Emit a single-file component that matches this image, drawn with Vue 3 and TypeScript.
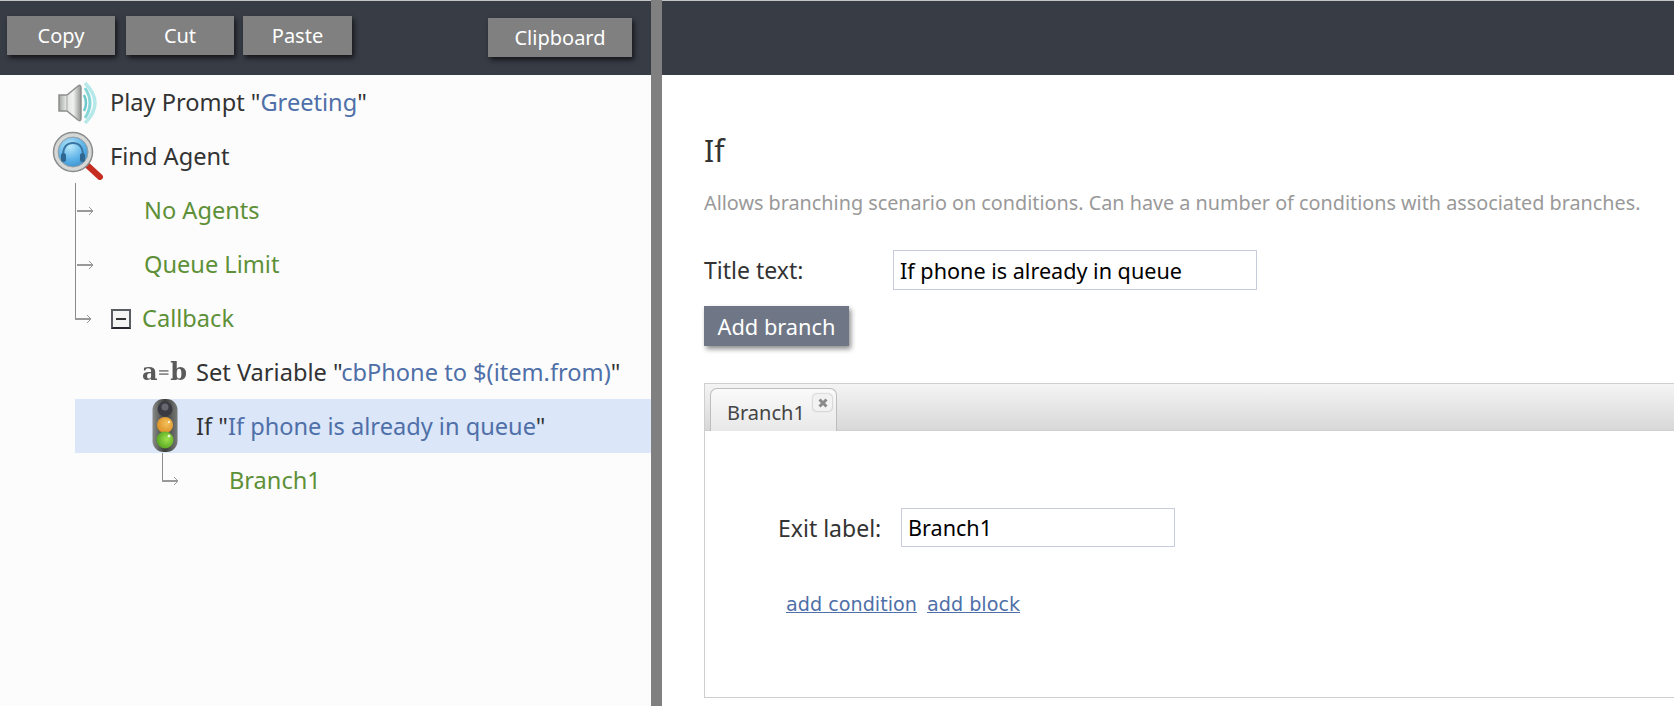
<script setup lang="ts">
const toolButtons = ['Copy', 'Cut', 'Paste'];
</script>

<template>
  <div class="page">
    <section class="left">
      <div class="toolbar">
        <button v-for="b in toolButtons" :key="b" class="tool" :class="b.toLowerCase()">{{ b }}</button>
        <button class="tool clipboard">Clipboard</button>
      </div>
      <div class="tree">
        <div class="row top">
          <svg class="ico ico-play" width="44" height="42" viewBox="0 0 44 42">
            <defs>
              <linearGradient id="cone" x1="0" y1="0" x2="1" y2="0">
                <stop offset="0" stop-color="#a2a6a3" />
                <stop offset=".3" stop-color="#dfe2df" />
                <stop offset=".65" stop-color="#f0f1f0" />
                <stop offset="1" stop-color="#8f928f" />
              </linearGradient>
            </defs>
            <path d="M1 13 L9 13 L20 4 Q23 2 23 6 L23 36 Q23 40 20 38 L9 29 L1 29 Z" fill="url(#cone)" stroke="#8c8f8c" stroke-width="1.5" />
            <path d="M9 13 V29" stroke="#a5a8a6" />
            <path d="M26 13 Q30 21 26 29" fill="none" stroke="#6cc8cb" stroke-width="2.5" />
            <path d="M27 6 Q37 21 27 36" fill="none" stroke="#86d6d8" stroke-width="3" />
            <path d="M27 1 Q47 21 27 41" fill="none" stroke="#b5e8e8" stroke-width="3.5" />
          </svg>
          <span class="dark">Play Prompt "<span class="blue">Greeting</span>"</span>
        </div>
        <div class="row top">
          <svg class="ico ico-find" width="52" height="50" viewBox="0 0 52 50">
            <defs>
              <radialGradient id="lens" cx=".4" cy=".3" r=".8">
                <stop offset="0" stop-color="#bce9fb" />
                <stop offset=".6" stop-color="#58b0e6" />
                <stop offset="1" stop-color="#3a8cc8" />
              </radialGradient>
            </defs>
            <path d="M35 34 L48 46" stroke="#c42d20" stroke-width="6" stroke-linecap="round" />
            <circle cx="21" cy="21" r="19.5" fill="#d6d8d7" stroke="#8a8c8b" stroke-width="1.5" />
            <circle cx="21" cy="21" r="15" fill="url(#lens)" stroke="#9a9e9f" />
            <path d="M11 25 Q11 12 21 12 Q31 12 31 25" fill="none" stroke="#3a76a4" stroke-width="2" />
            <rect x="9" y="22" width="5" height="9" rx="2.5" fill="#2f6791" />
            <rect x="28" y="22" width="5" height="9" rx="2.5" fill="#2f6791" />
          </svg>
          <span class="dark">Find Agent</span>
        </div>
        <div class="row branch">
          <svg class="link" width="24" height="54" viewBox="0 0 24 54">
            <path d="M.5 0 V54" stroke="#8b8b8b" fill="none" />
            <path d="M2 28 H18" stroke="#999" stroke-width="2" fill="none" />
            <path d="M14 24 L18 28 L14 32" stroke="#999" fill="none" />
          </svg>
          <span class="green exit">No Agents</span>
        </div>
        <div class="row branch">
          <svg class="link" width="24" height="54" viewBox="0 0 24 54">
            <path d="M.5 0 V54" stroke="#8b8b8b" fill="none" />
            <path d="M2 28 H18" stroke="#999" stroke-width="2" fill="none" />
            <path d="M14 24 L18 28 L14 32" stroke="#999" fill="none" />
          </svg>
          <span class="green exit">Queue Limit</span>
        </div>
        <div class="row branch">
          <svg class="link" width="24" height="54" viewBox="0 0 24 54">
            <path d="M.5 0 V27.5" stroke="#8b8b8b" fill="none" />
            <path d="M0 28 H16" stroke="#999" stroke-width="2" fill="none" />
            <path d="M12 24 L16 28 L12 32" stroke="#999" fill="none" />
          </svg>
          <span class="minus"><i></i></span>
          <span class="green">Callback</span>
        </div>
        <div class="row child">
          <span class="ico-var"><b>a</b><em>=</em><b>b</b></span>
          <span class="dark">Set Variable "<span class="blue">cbPhone to $(item.from)</span>"</span>
        </div>
        <div class="row selected">
          <svg class="ico ico-light" width="26" height="54" viewBox="0 0 26 54">
            <defs>
              <linearGradient id="case" x1="0" y1="0" x2="1" y2="0">
                <stop offset="0" stop-color="#8a8c88" />
                <stop offset=".5" stop-color="#3c3e3c" />
                <stop offset="1" stop-color="#777a76" />
              </linearGradient>
              <radialGradient id="amber" cx=".6" cy=".4" r=".7">
                <stop offset="0" stop-color="#f4c05c" />
                <stop offset="1" stop-color="#d98a1e" />
              </radialGradient>
              <radialGradient id="lime" cx=".6" cy=".45" r=".7">
                <stop offset="0" stop-color="#9ce24a" />
                <stop offset="1" stop-color="#4c9a1c" />
              </radialGradient>
            </defs>
            <rect x="0.5" y="0" width="25" height="53" rx="11" fill="url(#case)" />
            <circle cx="13" cy="10" r="7.5" fill="#3a3b42" />
            <circle cx="13" cy="8" r="3.5" fill="#666870" />
            <circle cx="13" cy="26" r="8" fill="url(#amber)" />
            <circle cx="13" cy="41" r="8.5" fill="url(#lime)" />
            <circle cx="17" cy="37" r="1.5" fill="#e6f7d0" />
            <circle cx="17" cy="23" r="1.2" fill="#fbeecb" />
          </svg>
          <span class="dark">If "<span class="blue">If phone is already in queue</span>"</span>
        </div>
        <div class="row sub">
          <svg class="link" width="24" height="54" viewBox="0 0 24 54">
            <path d="M.5 0 V27.5" stroke="#8b8b8b" fill="none" />
            <path d="M0 28 H16" stroke="#999" stroke-width="2" fill="none" />
            <path d="M12 24 L16 28 L12 32" stroke="#999" fill="none" />
          </svg>
          <span class="green sub-exit">Branch1</span>
        </div>
      </div>
    </section>

    <section class="right">
      <div class="topbar"></div>
      <div class="content">
        <h1>If</h1>
        <p class="desc">Allows branching scenario on conditions. Can have a number of conditions with associated branches.</p>
        <div class="title-field">
          <label>Title text:</label>
          <input class="title-input" type="text" value="If phone is already in queue" />
        </div>
        <button class="add-branch">Add branch</button>
        <div class="tabs">
          <div class="tab-head">
            <div class="tab">
              Branch1
              <span class="tab-close">
                <svg width="12" height="12" viewBox="0 0 12 12">
                  <path d="M2.5 2.5 L9.5 9.5 M9.5 2.5 L2.5 9.5" stroke="#8a8a8a" stroke-width="3" />
                </svg>
              </span>
            </div>
          </div>
          <div class="tab-body">
            <div class="exit-field">
              <label>Exit label:</label>
              <input class="exit-input" type="text" value="Branch1" />
            </div>
            <div class="links">
              <a href="#">add condition</a>
              <a href="#">add block</a>
            </div>
          </div>
        </div>
      </div>
    </section>
  </div>
</template>

<style scoped>
.page {
  display: flex;
  width: 1674px;
  height: 706px;
  overflow: hidden;
  font-family: 'Noto Sans', sans-serif;
  background: #fff;
}
.left {
  width: 651px;
  flex: none;
  background: #fcfcfc;
  border-right: 11px solid #808080;
}
.toolbar {
  display: flex;
  align-items: flex-start;
  height: 75px;
  box-sizing: border-box;
  padding: 15px 0 0 7px;
  background: #383c45;
  border-top: 1px solid #c4c4c4;
}
.tool {
  width: 108px;
  height: 39px;
  margin-right: 11px;
  padding: 0;
  border: none;
  background: #808080;
  color: #fff;
  font: 20px 'Noto Sans', sans-serif;
  box-shadow: 2px 3px 5px rgba(0, 0, 0, 0.65);
}
.cut {
  margin-right: 9px;
}
.paste {
  width: 109px;
  margin-right: 136px;
}
.clipboard {
  width: 144px;
  margin: 2px 0 0;
}
.tree {
  font-size: 23.6px;
}
.ico {
  filter: blur(0.4px);
}
.row {
  display: flex;
  align-items: center;
  height: 54px;
  white-space: nowrap;
}
.dark {
  color: #333;
}
.blue {
  color: #4f6fa8;
}
.green {
  color: #5e9038;
}
.top {
  position: relative;
  padding-left: 110px;
}
.ico-play {
  position: absolute;
  left: 58px;
  top: 7px;
}
.ico-find {
  position: absolute;
  left: 52px;
  top: 2px;
}
.branch {
  padding-left: 75px;
}
.link {
  flex: none;
}
.exit {
  margin-left: 45px;
}
.minus {
  display: flex;
  align-items: center;
  justify-content: center;
  width: 20px;
  height: 20px;
  box-sizing: border-box;
  margin: 2px 11px 0 12px;
  border: 2px solid #5a5c64;
  border-bottom-color: #24262e;
  background: #f4f4f4;
}
.minus i {
  display: block;
  width: 10px;
  height: 2px;
  background: #333;
}
.child {
  padding-left: 142px;
}
.ico-var {
  display: flex;
  align-items: center;
  width: 54px;
  flex: none;
  font-family: 'DejaVu Serif', serif;
  font-size: 24px;
  line-height: 1;
  color: #5a5a5a;
  filter: blur(0.4px);
}
.ico-var b {
  font-weight: 700;
}
.ico-var em {
  font-style: normal;
  font-weight: 700;
  font-size: 15px;
  color: #8a8a8a;
}
.selected {
  position: relative;
  margin-left: 75px;
  padding-left: 121px;
  background: #dbe6f8;
}
.ico-light {
  position: absolute;
  left: 77px;
  top: 0;
}
.sub {
  padding-left: 162px;
}
.sub-exit {
  margin-left: 43px;
}
.right {
  flex: 1;
  min-width: 0;
}
.topbar {
  height: 75px;
  box-sizing: border-box;
  background: #383c45;
  border-top: 1px solid #c4c4c4;
}
.content {
  padding: 56px 0 0 42px;
  color: #333;
}
h1 {
  margin: 0;
  font-size: 30px;
  font-weight: 400;
  line-height: 40px;
}
.desc {
  margin: 20px 0 0;
  font-size: 19.8px;
  line-height: 24px;
  color: #999;
  white-space: nowrap;
}
.title-field {
  display: flex;
  align-items: center;
  margin-top: 35px;
  font-size: 23px;
}
.title-field label {
  width: 189px;
  flex: none;
}
input {
  box-sizing: border-box;
  border: 1px solid #c8cbdc;
  background: #fff;
  color: #000;
  font: 21.6px 'Noto Sans', sans-serif;
  padding: 0 6px;
  outline: none;
}
.title-input {
  width: 364px;
  height: 40px;
}
.add-branch {
  display: block;
  width: 145px;
  height: 40px;
  margin-top: 16px;
  padding: 0;
  border: none;
  background: #6f7787;
  color: #fff;
  font: 21.8px 'Noto Sans', sans-serif;
  box-shadow: 2px 3px 5px rgba(0, 0, 0, 0.45);
}
.tabs {
  margin: 37px 0 0;
  width: 1100px;
  height: 315px;
  box-sizing: border-box;
  border: 1px solid #cfcfcf;
}
.tab-head {
  height: 47px;
  box-sizing: border-box;
  padding: 4px 0 0 5px;
  background: linear-gradient(#f4f4f4, #d8d8d8);
  border-bottom: 1px solid #cfcfcf;
}
.tab {
  position: relative;
  width: 127px;
  height: 43px;
  box-sizing: border-box;
  padding: 10px 0 0 16px;
  font-size: 20px;
  color: #444;
  background: linear-gradient(#fafafa, #e8e8e8);
  border: 1px solid #bdbdbd;
  border-bottom: none;
  border-radius: 7px 7px 0 0;
}
.tab-close {
  position: absolute;
  top: 5px;
  right: 4px;
  display: flex;
  align-items: center;
  justify-content: center;
  width: 19px;
  height: 17px;
  border-radius: 4px;
  background: #f2f2f2;
  box-shadow: 0 0 2px rgba(0, 0, 0, 0.4);
}
.tab-body {
  padding: 77px 0 0 73px;
}
.exit-field {
  display: flex;
  align-items: center;
  font-size: 23px;
}
.exit-field label {
  width: 123px;
  flex: none;
}
.exit-input {
  width: 274px;
  height: 39px;
}
.links {
  display: flex;
  gap: 10px;
  margin: 46px 0 0 8px;
  font-family: 'DejaVu Sans', sans-serif;
  font-size: 19.2px;
}
.links a {
  color: #4f6fa8;
}
</style>

<style>
html,
body {
  margin: 0;
  background: #fff;
}
</style>
